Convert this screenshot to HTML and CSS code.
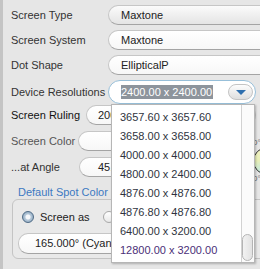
FILE: index.html
```html
<!DOCTYPE html>
<html lang="en">

<head>
  <meta charset="UTF-8">
  <title>Screening</title>
  <link rel="stylesheet" href="styles.css">
</head>

<body>
  <div class="panel">
    <div class="field">
      <span class="field-label">Screen Type</span>
      <div class="pill pill-shaded">Maxtone</div>
    </div>
    <div class="field">
      <span class="field-label">Screen System</span>
      <div class="pill">Maxtone</div>
    </div>
    <div class="field">
      <span class="field-label">Dot Shape</span>
      <div class="pill">EllipticalP</div>
    </div>
    <div class="field field-combo">
      <span class="field-label">Device Resolutions</span>
      <div class="combo">
        <div class="combo-box">
          <span class="combo-value">2400.00 x 2400.00</span>
          <span class="combo-arrow"><span class="arrow-down"></span></span>
        </div>
        <div class="combo-list">
          <ul class="combo-items">
            <li>3657.60 x 3657.60</li>
            <li>3658.00 x 3658.00</li>
            <li>4000.00 x 4000.00</li>
            <li>4800.00 x 2400.00</li>
            <li>4876.00 x 4876.00</li>
            <li>4876.80 x 4876.80</li>
            <li>6400.00 x 3200.00</li>
            <li class="is-hover">12800.00 x 3200.00</li>
          </ul>
          <div class="scroll-track">
            <div class="scroll-thumb"></div>
          </div>
        </div>
      </div>
    </div>

    <div class="screen-block">
      <div class="screen-fields">
        <div class="field field-screen">
          <span class="field-label label-ruling">Screen Ruling</span>
          <div class="pill pill-num">200.0</div>
        </div>
        <div class="field field-screen">
          <span class="field-label label-color">Screen Color</span>
          <div class="pill"></div>
        </div>
        <div class="field field-screen">
          <span class="field-label label-angle">...at Angle</span>
          <div class="pill pill-angle">45.000°</div>
        </div>
      </div>
      <div class="wheel-col">
        <span class="wheel-tick">0°</span>
        <div class="wheel"></div>
        <span class="wheel-tick">0°</span>
      </div>
    </div>

    <div class="spot-title">Default Spot Color Handling</div>
    <div class="spot-box">
      <div class="radio-row">
        <span class="radio checked"></span>
        <span class="radio-label">Screen as</span>
        <span class="radio"></span>
        <span class="radio-label">Use separation angle</span>
      </div>
      <div class="pill pill-spot">165.000° (Cyan)</div>
    </div>
  </div>
</body>

</html>
```

FILE: styles.css
```css
body {
  margin: 0;
  font-family: 'Liberation Sans', Arial, sans-serif;
  font-size: 11px;
  color: #333;
  background-color: #e6e6e6;
}

.panel {
  box-sizing: border-box;
  width: 260px;
  height: 269px;
  padding-top: 5px;
  border-left: 3px solid #c4c4c4;
  background-color: #e6e6e6;
  overflow: hidden;
}

.field {
  display: flex;
  align-items: center;
  height: 20px;
  margin-bottom: 5px;
}

.field-label {
  box-sizing: border-box;
  flex: none;
  width: 105px;
  padding-left: 8px;
  white-space: nowrap;
}

.pill {
  box-sizing: border-box;
  flex: none;
  width: 170px;
  height: 20px;
  line-height: 18px;
  padding-left: 12px;
  border: 1px solid #c6c6c6;
  border-bottom-color: #a4a4a4;
  border-radius: 10px;
  background: linear-gradient(#ffffff, #f7f7f7);
  color: #222;
  white-space: nowrap;
}

.pill-shaded {
  background: linear-gradient(#fbfbfb, #e4e4e4);
}

/* device resolution combo */

.field-combo {
  height: 24px;
  margin-bottom: 1px;
}

.combo {
  position: relative;
  width: 148px;
}

.combo-box {
  box-sizing: border-box;
  display: flex;
  align-items: center;
  height: 24px;
  padding-left: 12px;
  border: 1px solid #97bfd9;
  border-radius: 12px;
  background-color: white;
}

.combo-value {
  line-height: 14px;
  padding-right: 1px;
  background-color: #8d949c;
  color: white;
}

.combo-arrow {
  display: flex;
  align-items: center;
  justify-content: center;
  box-sizing: border-box;
  width: 25px;
  height: 16px;
  margin-left: auto;
  margin-right: 2px;
  border: 1px solid #c4c4c4;
  border-radius: 8px;
  background: linear-gradient(#fdfdfd, #dedede);
}

.arrow-down {
  width: 0;
  height: 0;
  border-left: 5px solid transparent;
  border-right: 5px solid transparent;
  border-top: 5px solid #2f6fae;
}

.combo-list {
  position: absolute;
  top: 24px;
  left: 3px;
  z-index: 10;
  box-sizing: border-box;
  display: flex;
  width: 144px;
  height: 159px;
  border: 1px solid #b6b6b6;
  background-color: white;
  box-shadow: 1px 1px 2px rgba(0, 0, 0, 0.25);
}

.combo-items {
  flex: 1;
  margin: 0;
  padding: 3px 0 0;
  list-style: none;
  overflow: hidden;
}

.combo-items li {
  height: 19px;
  line-height: 19px;
  padding-left: 8px;
  color: #2f3440;
  white-space: nowrap;
}

.combo-items li.is-hover {
  color: #4b2f78;
}

.scroll-track {
  display: flex;
  flex-direction: column;
  justify-content: flex-end;
  box-sizing: border-box;
  width: 13px;
  padding-bottom: 1px;
  border-left: 1px solid #d2d2d2;
  background-color: #fbfbfb;
}

.scroll-thumb {
  box-sizing: border-box;
  width: 11px;
  height: 27px;
  border: 1px solid #b4b4b4;
  border-radius: 6px;
  background: linear-gradient(90deg, #f2f2f2, #e2e2e2);
}

/* screen ruling / color / angle */

.screen-block {
  display: flex;
}

.screen-fields {
  flex: none;
  width: 250px;
}

.field-screen {
  margin-bottom: 6px;
}

.label-ruling {
  width: 83px;
  color: #111;
}

.label-color {
  width: 75px;
  color: #555;
}

.label-angle {
  width: 76px;
}

.pill-num {
  padding-left: 11px;
}

.pill-angle {
  padding-left: 18px;
}

.wheel-col {
  display: flex;
  flex-direction: column;
  align-items: flex-start;
  flex: none;
  margin-top: 34px;
}

.wheel-tick {
  height: 8px;
  line-height: 8px;
  font-size: 8px;
  color: #666;
}

.wheel {
  box-sizing: border-box;
  width: 28px;
  height: 28px;
  border: 1px solid #333;
  border-radius: 50%;
  background: conic-gradient(from 200deg, #bfe8e4, #e8f0b8, #f3f1c4, #c9ecd6, #a9dfe6, #bfe8e4);
}

/* spot color group */

.spot-title {
  height: 13px;
  line-height: 13px;
  margin: 3px 0 0 15px;
  color: #3c79c2;
  white-space: nowrap;
}

.spot-box {
  box-sizing: border-box;
  width: 260px;
  height: 60px;
  margin-left: 9px;
  padding: 10px 0 0 5px;
  border: 1px solid #c4c4c4;
  border-radius: 6px;
  background-color: #e9e9e9;
}

.radio-row {
  display: flex;
  align-items: center;
  height: 14px;
  margin-bottom: 9px;
  white-space: nowrap;
}

.radio {
  box-sizing: border-box;
  flex: none;
  width: 12px;
  height: 12px;
  margin-left: 4px;
  border: 1px solid #a8a8a8;
  border-radius: 50%;
  background: linear-gradient(#ffffff, #e8e8e8);
}

.radio.checked {
  border-color: #4f6b86;
  background: radial-gradient(circle, #f6f8fb 0, #f6f8fb 2px, #b7c9d9 3px, #7b99b5 100%);
}

.radio-label {
  margin-left: 6px;
  margin-right: 9px;
  color: #222;
}

.pill-spot {
  width: 120px;
  height: 21px;
  line-height: 19px;
  padding-left: 16px;
}
```
